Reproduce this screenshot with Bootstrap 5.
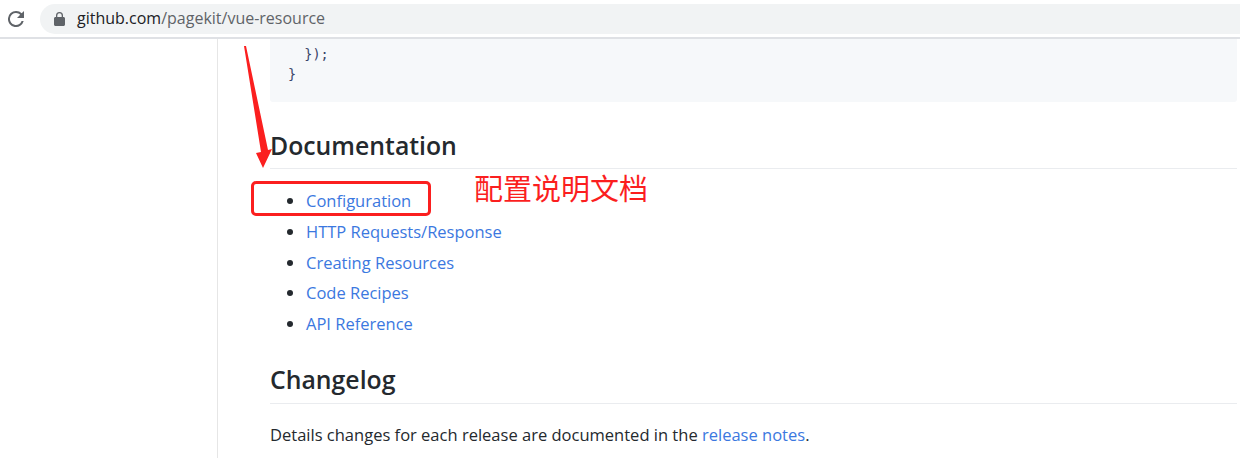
<!DOCTYPE html>
<html lang="en"><head><meta charset="utf-8"><title>vue-resource</title>
<link rel="stylesheet" href="https://cdn.jsdelivr.net/npm/bootstrap@5.3.0/dist/css/bootstrap.min.css">
<style>
html,body{height:458px;overflow:hidden;background:#fff}
body{font-family:"Open Sans","Liberation Sans",sans-serif;color:#24292e}
.topbar{height:39px;border-bottom:2px solid #dfe1e5;padding-left:8px}
.reload{width:16px;height:16px;color:#5f6368}
.addr{margin-left:16px;flex:1;height:30px;background:#f1f3f4;border-radius:15px 0 0 15px;padding-left:13px}
.addr svg{width:12px;height:14px;color:#5f6368}
.url{margin-left:12px;font-size:16px;line-height:24px;padding-bottom:2px;color:#5f6368;font-family:"Open Sans",sans-serif}
.url b{font-weight:400;color:#202124}
.pagebody{height:419px}
.sidecol{width:218px;border-right:1px solid #e6e6e6;flex:none}
.main{flex:1;padding:0 3px 0 52px;min-width:0}
.codebox{height:63px;background:#f6f8fa;border-radius:0 0 3px 3px;padding:6px 0 0 18px;font:13.5px/19.5px "DejaVu Sans Mono","Liberation Mono",monospace;color:#24292e;white-space:pre;margin:0}
.codebox i{font-style:normal;color:#3a4468}
.head1,.head2{font-size:24.8px;font-weight:600;line-height:32px;margin:0;border-bottom:1px solid #eaecef;color:#24292e}
.head1{margin-top:27px;padding-bottom:7px}
.head2{margin-top:23px;padding-bottom:8px}
.docs{margin:17px 0 0;padding-left:36px;font-size:16.5px;line-height:30.75px}
.docs a,.relnote{color:#3b78e0;text-decoration:none}
.para{font-size:16.52px;line-height:24px;margin:19px 0 0}
.overlay{position:absolute;inset:0;pointer-events:none}
.redbox{position:absolute;left:251px;top:181px;width:180px;height:35px;border:3.5px solid #fb1f1f;border-radius:5px}
.note{position:absolute;left:474px;top:168px;font:29px/38px "Noto Sans CJK SC",sans-serif;color:#fb1f1f;white-space:nowrap}
</style></head><body>
<div class="topbar d-flex align-items-center">
<svg class="reload" viewBox="0 0 16 16"><path fill="currentColor" d="M13.7 2.3A7.9 7.9 0 0 0 8 0a8 8 0 1 0 7.7 10h-2.100A6 6 0 1 1 8 2c1.700 0 3.100.7 4.200 1.800L9 7h7V0z"/></svg>
<div class="addr d-flex align-items-center">
<svg viewBox="0 0 12 14"><path fill="currentColor" d="M10.500 5H10V3.500a3.500 3.500 0 0 0-7 0V5h-.5C1.700 5 1 5.700 1 6.500v6c0 .8.700 1.500 1.500 1.500h8c.8 0 1.500-.7 1.500-1.500v-6C12 5.700 11.300 5 10.500 5zM4.300 5V3.500a2.200 2.200 0 0 1 4.400 0V5z"/></svg>
<span class="url"><b>github.com</b>/pagekit/vue-resource</span></div>
</div>
<div class="pagebody d-flex">
<div class="sidecol"></div>
<div class="main">
<pre class="codebox">  <i>});</i>
<i>}</i></pre>
<h2 class="head1">Documentation</h2>
<ul class="docs">
<li><a href="#">Configuration</a></li>
<li><a href="#">HTTP Requests/Response</a></li>
<li><a href="#">Creating Resources</a></li>
<li><a href="#">Code Recipes</a></li>
<li><a href="#">API Reference</a></li>
</ul>
<h2 class="head2">Changelog</h2>
<p class="para">Details changes for each release are documented in the <a class="relnote" href="#">release notes</a>.</p>
</div></div>
<div class="overlay">
<svg class="position-absolute top-0 start-0" width="1240" height="458"><polygon fill="#fb1f1f" points="244,46 246,46 268,150 272,149 263,168 256,153 261,152"/></svg>
<div class="redbox"></div>
<div class="note">配置说明文档</div>
</div>
</body></html>
